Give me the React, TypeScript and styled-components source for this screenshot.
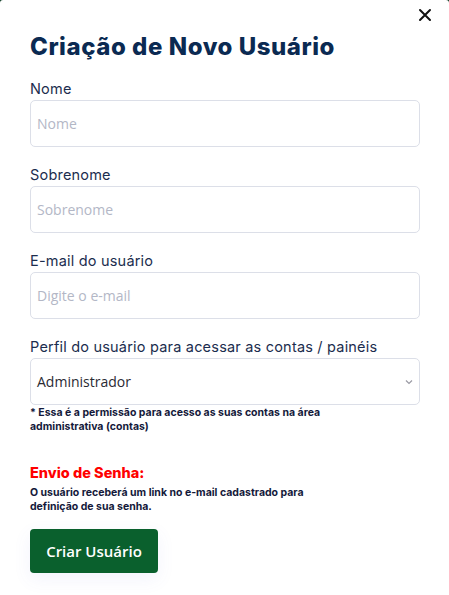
import React from "react";
import styled, { createGlobalStyle } from "styled-components";

const Global = createGlobalStyle`
  html, body { margin: 0; padding: 0; background: #0b3a22; }
  * { box-sizing: border-box; }
`;

const Modal = styled.div`
  width: 449px;
  height: 595px;
  background: #fff;
  border-radius: 3px 3px 0 0;
  padding: 0 29px 0 30px;
  display: flex;
  flex-direction: column;
  font-family: "Inter", "Open Sans", sans-serif;
`;

const TopBar = styled.div`
  display: flex;
  justify-content: flex-end;
  padding-top: 8px;
  margin-right: -12px;
  height: 30px;
`;

const CloseButton = styled.button`
  border: none;
  background: none;
  padding: 0;
  width: 14px;
  height: 14px;
  cursor: pointer;
  display: flex;
`;

const Title = styled.h1`
  margin: 2px 0 17px;
  font-family: "Inter", sans-serif;
  font-weight: 800;
  font-size: 24px;
  line-height: 30px;
  color: #0b2a52;
  letter-spacing: 0.55px;
`;

const Field = styled.div<{ $last?: boolean }>`
  display: flex;
  flex-direction: column;
  gap: 1px;
  margin-bottom: ${(p) => (p.$last ? "0" : "18px")};
`;

const Label = styled.label`
  font-family: "Inter", sans-serif;
  font-size: 14.5px;
  line-height: 20px;
  letter-spacing: 0.2px;
  color: #1b2d4e;
`;

const Input = styled.input`
  width: 100%;
  height: 47px;
  border: 1px solid #dcdfe8;
  border-radius: 5px;
  padding: 0 6px;
  font-family: "Open Sans", sans-serif;
  font-size: 14px;
  color: #222;
  outline: none;
  &::placeholder { color: #b3b7c6; }
`;

const SelectBox = styled.div`
  height: 47px;
  border: 1px solid #dcdfe8;
  border-radius: 5px;
  padding: 0 6px 0 6px;
  display: flex;
  align-items: center;
  justify-content: space-between;
  font-family: "Open Sans", sans-serif;
  font-size: 14px;
  color: #2a2a33;
`;

const Note = styled.p`
  margin: 0;
  max-width: 300px;
  font-family: "Inter", sans-serif;
  font-weight: 700;
  font-size: 10.5px;
  line-height: 14px;
  color: #14193a;
`;

const NoteWide = styled(Note)`
  max-width: 330px;
`;

const SectionTitle = styled.h2`
  margin: 29px 0 3px;
  font-family: "Inter", sans-serif;
  font-weight: 800;
  font-size: 14.5px;
  line-height: 20px;
  color: #ff0000;
`;

const Button = styled.button`
  margin-top: 15px;
  width: 128px;
  height: 44px;
  border: none;
  border-radius: 4px;
  background: #0a602d;
  color: #fff;
  font-family: "Open Sans", sans-serif;
  font-weight: 600;
  font-size: 15px;
  box-shadow: 0 6px 18px rgba(90, 100, 220, 0.08);
  cursor: pointer;
`;

export default function App() {
  return (
    <>
      <Global />
      <Modal>
        <TopBar>
          <CloseButton aria-label="Fechar">
            <svg width="14" height="14" viewBox="0 0 14 14">
              <path d="M2 2 L12 12 M12 2 L2 12" stroke="#111" strokeWidth="2" strokeLinecap="round" />
            </svg>
          </CloseButton>
        </TopBar>
        <Title>Criação de Novo Usuário</Title>
        <Field>
          <Label>Nome</Label>
          <Input placeholder="Nome" />
        </Field>
        <Field>
          <Label>Sobrenome</Label>
          <Input placeholder="Sobrenome" />
        </Field>
        <Field>
          <Label>E-mail do usuário</Label>
          <Input placeholder="Digite o e-mail" />
        </Field>
        <Field $last>
          <Label>Perfil do usuário para acessar as contas / painéis</Label>
          <SelectBox>
            <span>Administrador</span>
            <svg width="8" height="6" viewBox="0 0 8 6">
              <path d="M1 1.5 L4 4.5 L7 1.5" stroke="#9a9aa4" strokeWidth="1.2" fill="none" />
            </svg>
          </SelectBox>
          <NoteWide>* Essa é a permissão para acesso as suas contas na área administrativa (contas)</NoteWide>
        </Field>
        <SectionTitle>Envio de Senha:</SectionTitle>
        <Note>O usuário receberá um link no e-mail cadastrado para definição de sua senha.</Note>
        <div>
          <Button>Criar Usuário</Button>
        </div>
      </Modal>
    </>
  );
}
